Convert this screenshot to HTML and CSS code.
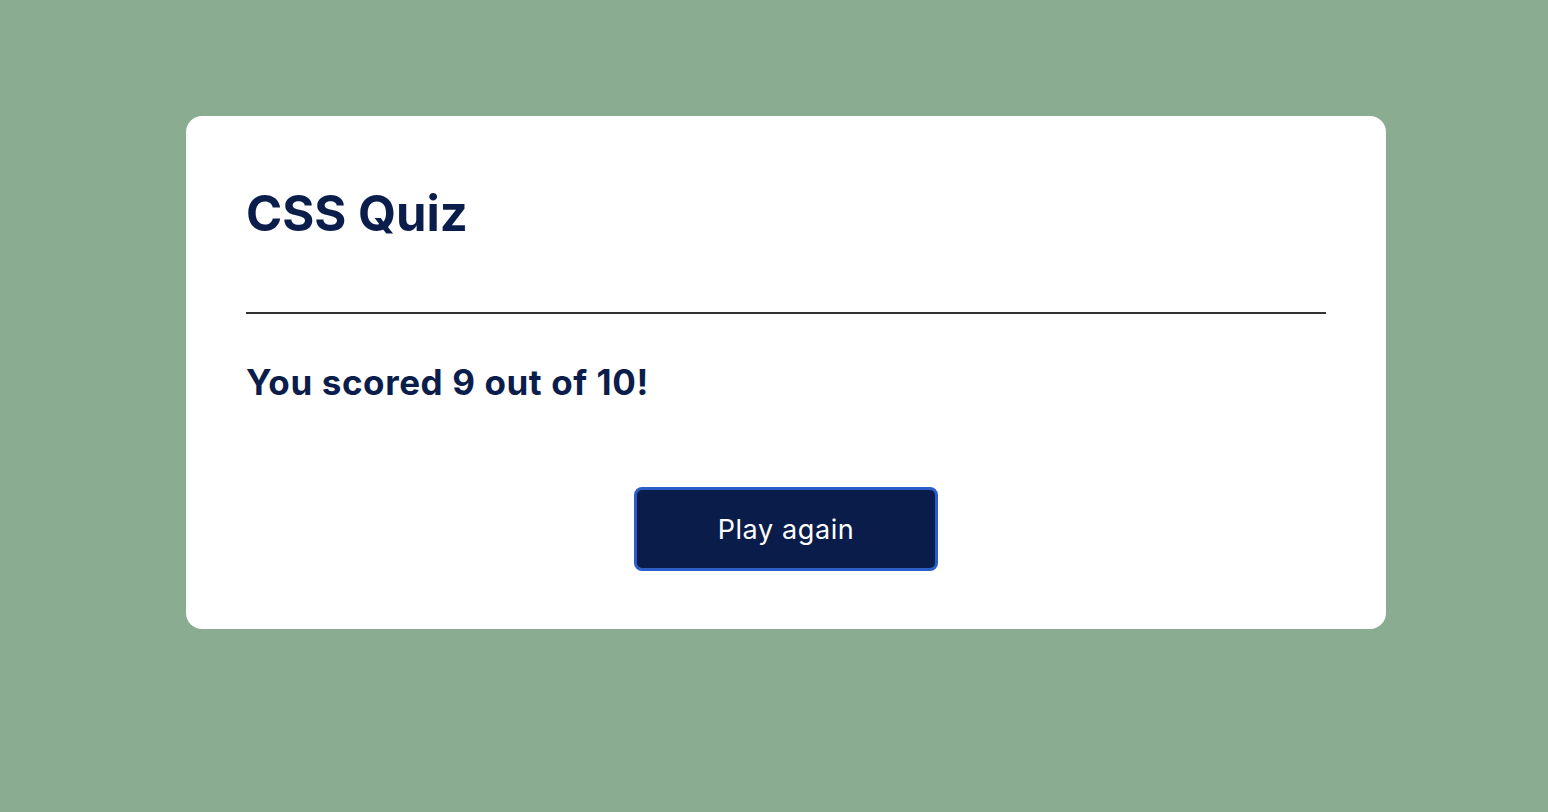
FILE: index.html
```html
<!DOCTYPE html>
<html lang="en">
<head>
<meta charset="utf-8">
<title>CSS Quiz</title>
<link rel="stylesheet" href="styles.css">
</head>
<body>
<main class="card">
  <h1 class="title">CSS Quiz</h1>
  <hr class="divider">
  <p class="score">You scored 9 out of 10!</p>
  <div class="actions">
    <button class="btn" type="button">Play again</button>
  </div>
</main>
</body>
</html>
```

FILE: styles.css
```css
* { box-sizing: border-box; }
html, body { height: 100%; }
body {
  margin: 0;
  padding: 116px 0 0 24px;
  background: #8aad91;
  font-family: Inter, "Open Sans", sans-serif;
  color: #0b1d4b;
}
.card {
  width: 1200px;
  margin: 0 auto;
  background: #ffffff;
  border-radius: 16px;
  padding: 60px 60px 58px;
  display: flex;
  flex-direction: column;
}
.title {
  margin: 0;
  font-size: 49px;
  font-weight: 700;
  line-height: 76px;
  letter-spacing: 0;
}
.divider {
  margin: 60px 0 0;
  border: 0;
  height: 2px;
  background: #333333;
}
.score {
  margin: 46px 0 0;
  font-size: 35px;
  font-weight: 700;
  line-height: 44px;
  letter-spacing: 0.6px;
}
.actions {
  display: flex;
  justify-content: center;
  margin-top: 83px;
}
.btn {
  width: 304px;
  height: 84px;
  background: #0a1c4a;
  color: #ffffff;
  border: 3px solid #2a5dc8;
  border-radius: 8px;
  font-family: Inter, "Open Sans", sans-serif;
  font-size: 27px;
  font-weight: 400;
  letter-spacing: 0.6px;
}
```
